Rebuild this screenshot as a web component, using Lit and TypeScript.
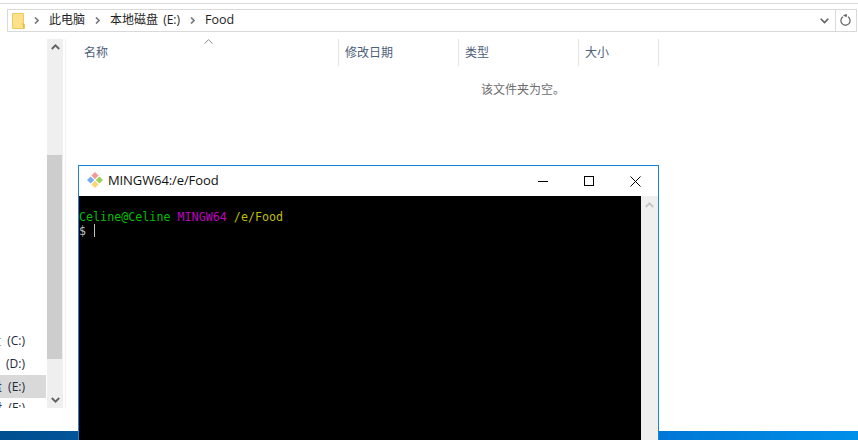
import { LitElement, html, css } from "lit";
import { customElement } from "lit/decorators.js";

@customElement("app-root")
export class AppRoot extends LitElement {
  static styles = css`
    :host {
      display: block;
      position: relative;
      width: 858px;
      height: 440px;
      overflow: hidden;
      background: #fff;
      font-family: "Open Sans", "Noto Sans CJK SC", sans-serif;
      font-size: 12px;
      color: #1f1f1f;
    }
    .page { display: flex; flex-direction: column; height: 440px; }
    .topline { height: 1px; margin-top: 3px; background: #dcdcdc; flex: none; }
    .address {
      flex: none; height: 21px; margin: 5px 1px 0 7px; border: 1px solid #d9d9d9;
      display: flex; align-items: center; padding-left: 4px;
    }
    .crumbs { flex: 1; display: flex; align-items: center; height: 100%; }
    .crumb { font-size: 12px; line-height: 20px; color: #1e1e1e; padding-bottom: 2px; word-spacing: 2px; }
    .crumb.food { font-size: 12.5px; }
    .sep { width: 5px; height: 7px; margin: 0 10px; flex: none; }
    .sep.first { margin: 0 10px 0 9px; }
    .folder { width: 13px; height: 16px; flex: none; display: block; }
    .chev { width: 9px; height: 6px; margin-right: 6px; flex: none; }
    .refresh { width: 20px; height: 100%; border-left: 1px solid #d9d9d9; display: flex; align-items: center; justify-content: center; flex: none; }
    .body { flex: 1; display: flex; min-height: 0; padding-top: 7px; }
    .nav { width: 47px; flex: none; display: flex; flex-direction: column; justify-content: flex-end; height: 369px; overflow: hidden; }
    .drive {
      height: 23px; box-sizing: border-box; padding-bottom: 2px; flex: none; display: flex; justify-content: flex-end; align-items: center;
      white-space: nowrap; overflow: hidden; padding-right: 22px; font-size: 12px; color: #1d2a3a; word-spacing: 3px;
    }
    .drive.sel { background: #d9d9d9; width: 46px; padding-right: 21px; }
    .drive.clip { height: 10px; align-items: flex-start; padding-bottom: 0; }
    .nav-spacer { flex: 1; }
    .sb { width: 16px; height: 369px; background: #efefef; flex: none; display: flex; flex-direction: column; align-items: flex-start; }
    .sb-arrow { width: 16px; height: 16px; display: flex; align-items: center; justify-content: center; flex: none; }
    .sb-gap1 { height: 100px; flex: none; }
    .sb-thumb { width: 15px; height: 204px; background: #cdcdcd; flex: none; }
    .sb-gap2 { flex: 1; }
    .thin { width: 1px; height: 369px; margin-left: 2px; background: #f2f2f2; flex: none; }
    .main { flex: 1; position: relative; }
    .head { display: flex; height: 27px; margin-left: 0; }
    .col { box-sizing: border-box; border-right: 1px solid #e5e5e5; display: flex; align-items: center; padding-left: 6px; padding-bottom: 2px; color: #4c607a; font-size: 12px; }
    .c1 { width: 273px; padding-left: 18px; }
    .c2 { width: 120px; }
    .c3 { width: 120px; }
    .c4 { width: 80px; }
    .caret { position: absolute; left: 138px; top: 0; width: 9px; height: 5px; }
    .empty { text-align: left; margin: 14px 0 0 415px; color: #6d6d6d; font-size: 12px; line-height: 20px; }
    .taskbar { position: absolute; left: 0; right: 0; bottom: 0; height: 9px; background: linear-gradient(90deg, #004f8f 0%, #0066b8 40%, #0078d7 78%, #008fe9 100%); }
    .term {
      position: absolute; left: 78px; top: 165px; width: 581px; height: 275px; box-sizing: border-box;
      border: 1px solid #1884d8; border-bottom: none; background: #fff; display: flex; flex-direction: column;
    }
    .title { height: 30px; flex: none; display: flex; align-items: center; background: #fff; }
    .gitlogo { width: 18px; height: 18px; margin-left: 7px; margin-right: 4px; margin-bottom: 2px; flex: none; }
    .ttext { flex: 1; font-family: "Open Sans", sans-serif; font-size: 13px; color: #111; letter-spacing: -0.1px; padding-bottom: 2px; }
    .wbtn { width: 46px; height: 30px; display: flex; align-items: center; justify-content: center; flex: none; }
    .tbody { flex: 1; display: flex; min-height: 0; }
    .console {
      flex: 1; background: #000; padding: 14px 0 0 0;
      font-family: "DejaVu Sans Mono", monospace; font-size: 11.7px; line-height: 14px; white-space: pre; color: #bfbfbf;
    }
    .g { color: #00bf00; }
    .m { color: #bf00bf; }
    .y { color: #bfbf00; }
    .cursor { display: inline-block; width: 1px; height: 13px; background: #bfbfbf; vertical-align: -2px; margin-left: 1px; }
    .tsb { width: 17px; background: #efefef; flex: none; }
    .tsb .sb-arrow { width: 17px; height: 17px; }
  `;

  private sep(first = false) {
    return html`<svg class="sep ${first ? "first" : ""}" viewBox="0 0 5 7"><path d="M1 0.5 L4 3.5 L1 6.5" fill="none" stroke="#7a7a7a" stroke-width="1.7"/></svg>`;
  }

  render() {
    return html`
      <div class="page">
        <div class="topline"></div>
        <div class="address">
          <div class="crumbs">
            <svg class="folder" viewBox="0 0 13 16">
              <path d="M0.5 0.5 H11.5 V11 H12.5 V15.5 H0.5 Z" fill="#fde08a" stroke="#eccb5e"/>
              <path d="M9.5 11 H11.5 V15" fill="none" stroke="#e8b93e"/>
            </svg>
            ${this.sep(true)}
            <span class="crumb">此电脑</span>
            ${this.sep()}
            <span class="crumb">本地磁盘 (E:)</span>
            ${this.sep()}
            <span class="crumb food">Food</span>
          </div>
          <svg class="chev" viewBox="0 0 9 6"><path d="M0.7 0.8 L4.5 4.6 L8.3 0.8" fill="none" stroke="#606060" stroke-width="1.6"/></svg>
          <div class="refresh">
            <svg width="12" height="13" viewBox="0 0 12 13"><path d="M3.5 1.5 H7 M6 0 V3 M8 2.8 A4.6 4.6 0 1 1 3 2.8" fill="none" stroke="#6a6a6a" stroke-width="1.3"/></svg>
          </div>
        </div>
        <div class="body">
          <div class="nav">
            <div class="nav-spacer"></div>
            <div class="drive">本地磁盘 (C:)</div>
            <div class="drive">本地磁盘 (D:)</div>
            <div class="drive sel">本地磁盘 (E:)</div>
            <div class="drive clip">本地磁盘 (F:)</div>
          </div>
          <div class="sb">
            <div class="sb-arrow"><svg width="9" height="6" viewBox="0 0 9 6"><path d="M0.8 5 L4.5 1.3 L8.2 5" fill="none" stroke="#606060" stroke-width="1.8"/></svg></div>
            <div class="sb-gap1"></div>
            <div class="sb-thumb"></div>
            <div class="sb-gap2"></div>
            <div class="sb-arrow"><svg width="9" height="6" viewBox="0 0 9 6"><path d="M0.8 1 L4.5 4.7 L8.2 1" fill="none" stroke="#606060" stroke-width="1.8"/></svg></div>
          </div>
          <div class="thin"></div>
          <div class="main">
            <svg class="caret" viewBox="0 0 9 5"><path d="M0.5 4.5 L4.5 0.7 L8.5 4.5" fill="none" stroke="#8c8c8c"/></svg>
            <div class="head">
              <div class="col c1">名称</div>
              <div class="col c2">修改日期</div>
              <div class="col c3">类型</div>
              <div class="col c4">大小</div>
            </div>
            <div class="empty">该文件夹为空。</div>
          </div>
        </div>
      </div>
      <div class="taskbar"></div>
      <div class="term">
        <div class="title">
          <svg class="gitlogo" viewBox="0 0 18 18">
            <path d="M9 1 L12.6 4.6 L9 8.2 L5.4 4.6 Z" fill="#f29a9a"/>
            <path d="M1 9 L4.6 5.4 L8.2 9 L4.6 12.6 Z" fill="#74aef2"/>
            <path d="M17 9 L13.4 5.4 L9.8 9 L13.4 12.6 Z" fill="#9ccf5c"/>
            <path d="M9 17 L12.6 13.4 L9 9.8 L5.4 13.4 Z" fill="#f6d870"/>
          </svg>
          <span class="ttext">MINGW64:/e/Food</span>
          <div class="wbtn"><svg width="10" height="10" viewBox="0 0 10 10"><path d="M0 5.5 H10" stroke="#000" stroke-width="1"/></svg></div>
          <div class="wbtn"><svg width="10" height="10" viewBox="0 0 10 10"><rect x="0.5" y="0.5" width="9" height="9" fill="none" stroke="#000"/></svg></div>
          <div class="wbtn"><svg width="11" height="11" viewBox="0 0 11 11"><path d="M0.5 0.5 L10.5 10.5 M10.5 0.5 L0.5 10.5" stroke="#000" stroke-width="1"/></svg></div>
        </div>
        <div class="tbody">
          <div class="console"><span class="g">Celine@Celine</span> <span class="m">MINGW64</span> <span class="y">/e/Food</span>
$ <span class="cursor"></span></div>
          <div class="tsb"><div class="sb-arrow"><svg width="9" height="6" viewBox="0 0 9 6"><path d="M0.8 5 L4.5 1.3 L8.2 5" fill="none" stroke="#c4c4c4" stroke-width="1.8"/></svg></div></div>
        </div>
      </div>
    `;
  }
}
